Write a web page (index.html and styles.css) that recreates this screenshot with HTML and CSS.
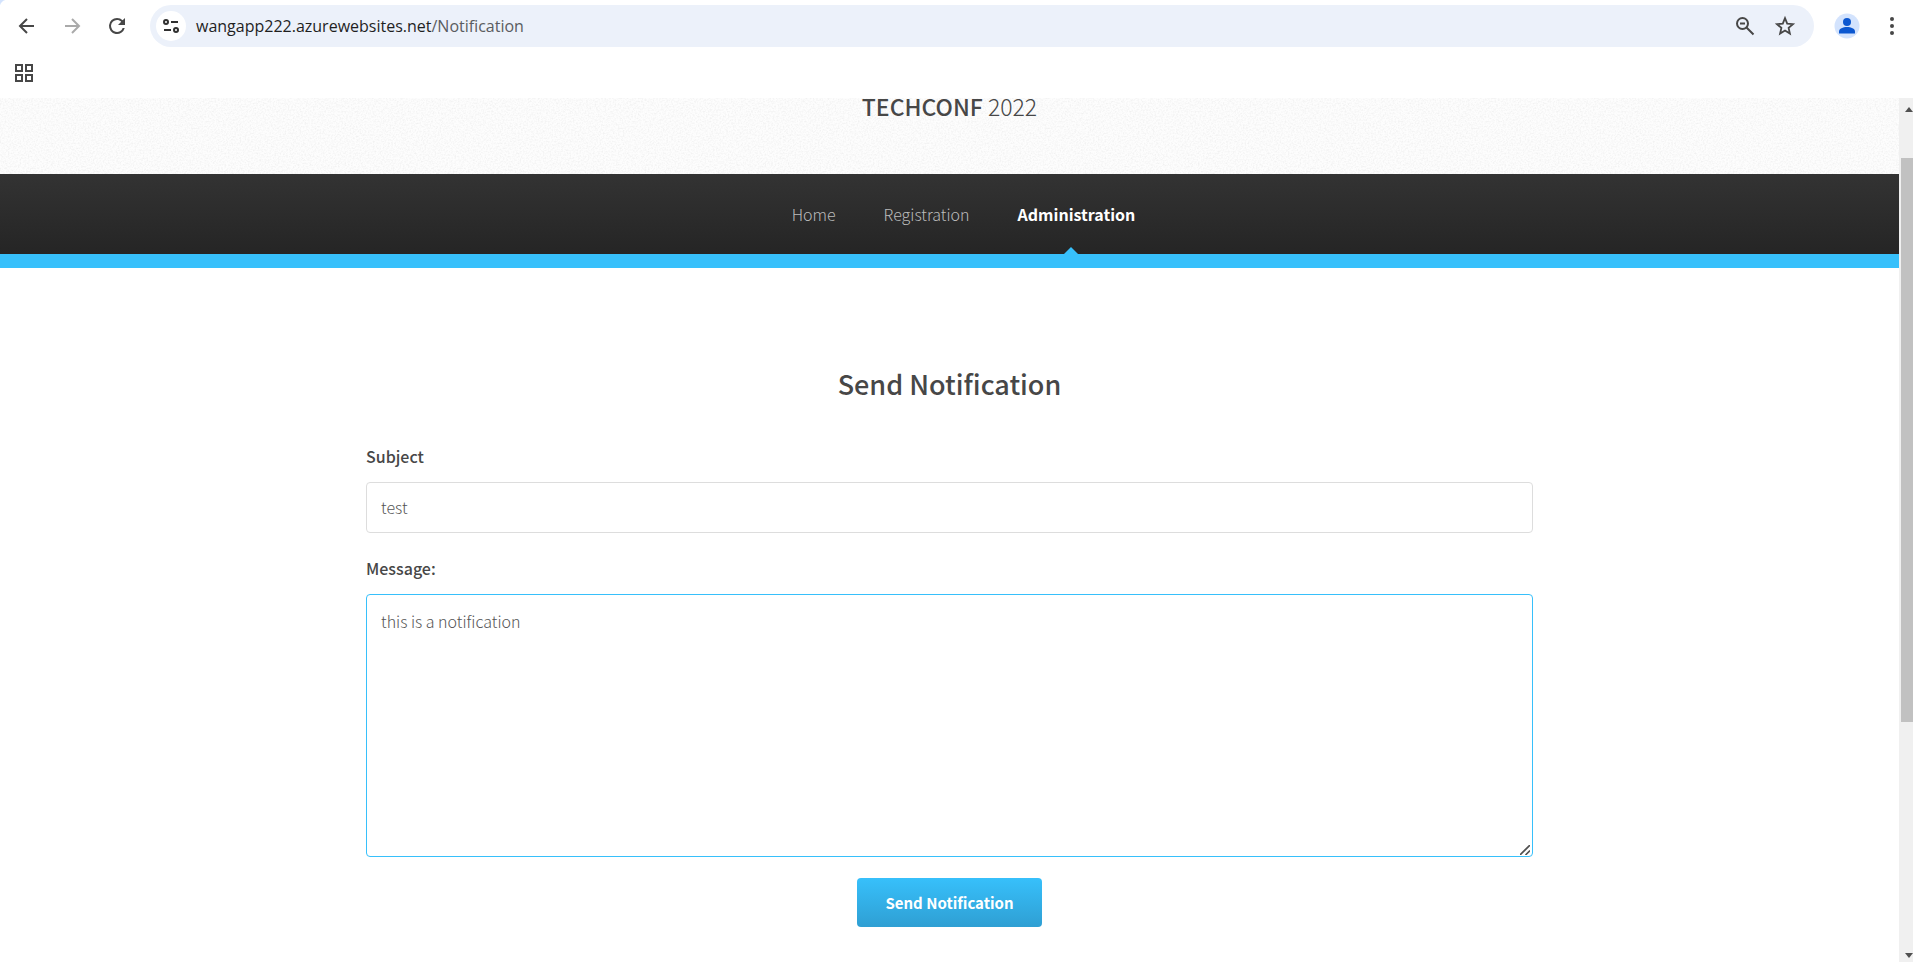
FILE: index.html
```html
<!DOCTYPE html>
<html lang="en">
<head>
<meta charset="utf-8">
<title>TechConf 2022 - Send Notification</title>
<link rel="stylesheet" href="styles.css">
</head>
<body>
<div class="browser">
  <div class="toolbar">
    <button class="tool" aria-label="Back"><svg width="24" height="24" viewBox="0 0 24 24"><path d="M19 12H5M12 5L5 12l7 7" fill="none" stroke="#474747" stroke-width="2"/></svg></button>
    <button class="tool" aria-label="Forward"><svg width="24" height="24" viewBox="0 0 24 24"><path d="M5 12h14M12 5l7 7-7 7" fill="none" stroke="#aaa" stroke-width="2"/></svg></button>
    <button class="tool" aria-label="Reload"><svg width="24" height="24" viewBox="0 0 24 24"><path d="M17.650 6.350A7.960 7.960 0 0 0 12 4a8 8 0 1 0 7.740 10h-2.080A6 6 0 1 1 12 6c1.660 0 3.140.690 4.220 1.780L13 11h7V4z" fill="#474747"/></svg></button>
    <div class="omnibox">
      <button class="site-info" aria-label="View site information"><svg width="20" height="20" viewBox="0 0 20 20"><g fill="none" stroke="#303030" stroke-width="2"><circle cx="5" cy="6" r="2"/><path d="M10 6h7M3 14h7"/><circle cx="15" cy="14" r="2"/></g></svg></button>
      <div class="address">wangapp222.azurewebsites.net<span class="path">/Notification</span></div>
      <button class="tool small" aria-label="Zoom"><svg width="24" height="24" viewBox="0 0 24 24"><g fill="none" stroke="#474747" stroke-width="2"><circle cx="9.500" cy="9.500" r="5.500"/><path d="M13.500 13.500l7 7M7 9.500h5"/></g></svg></button>
      <button class="tool small" aria-label="Bookmark this tab"><svg width="24" height="24" viewBox="0 0 24 24"><path d="M12 4.200l2.200 5.400 5.800.5-4.400 3.800 1.300 5.700-4.900-3-4.900 3 1.300-5.700L4 10.100l5.800-.5z" fill="none" stroke="#474747" stroke-width="1.800"/></svg></button>
    </div>
    <button class="avatar" aria-label="Profile"><svg width="26" height="26" viewBox="0 0 26 26"><circle cx="13" cy="13" r="12.500" fill="#d3e3fd"/><circle cx="13" cy="9" r="4" fill="#0b57d0"/><path d="M5 20.500v-2c0-3 4-4.500 8-4.500s8 1.500 8 4.500v2z" fill="#0b57d0"/></svg></button>
    <button class="tool menu" aria-label="Menu"><svg width="24" height="24" viewBox="0 0 24 24"><g fill="#474747"><circle cx="12" cy="5" r="2"/><circle cx="12" cy="12" r="2"/><circle cx="12" cy="19" r="2"/></g></svg></button>
  </div>
  <div class="bookmarks">
    <button class="tool" aria-label="Apps"><svg width="20" height="20" viewBox="0 0 20 20"><path d="M2 2h6v6H2zM12 2h6v6h-6zM2 12h6v6H2zM12 12h6v6h-6z" fill="none" stroke="#474747" stroke-width="2"/></svg></button>
  </div>
</div>
<div class="viewport">
  <div class="page">
    <header class="header">
      <svg class="grain" width="100%" height="100%" aria-hidden="true"><filter id="noise"><feTurbulence type="fractalNoise" baseFrequency="0.6" numOctaves="3"/><feColorMatrix values="0 0 0 0 0  0 0 0 0 0  0 0 0 0 0  0.100 0 0 0 -0.040"/></filter><rect width="100%" height="100%" filter="url(#noise)"/></svg>
      <h1 class="logo"><strong>TECHCONF</strong> 2022</h1>
    </header>
    <nav class="nav">
      <a href="#">Home</a>
      <a href="#">Registration</a>
      <a href="#" class="current">Administration</a>
    </nav>
    <main class="main">
      <h2 class="title">Send Notification</h2>
      <form class="form">
        <label for="subject">Subject</label>
        <input id="subject" type="text" value="test">
        <label for="message">Message:</label>
        <div class="message">
          <textarea id="message">this is a notification</textarea>
          <svg class="grip" width="10" height="10" viewBox="0 0 10 10" aria-hidden="true"><path d="M0 10L10 0M5.500 10L10 5.500" stroke="#505050" stroke-width="1.600"/></svg>
        </div>
        <button class="submit" type="button">Send Notification</button>
      </form>
    </main>
  </div>
  <div class="scrollbar" aria-hidden="true">
    <svg width="8" height="5" viewBox="0 0 8 5"><path d="M4 0l4 5H0z" fill="#505050"/></svg>
    <div class="track"><div class="thumb"></div></div>
    <svg width="8" height="5" viewBox="0 0 8 5"><path d="M4 5l4-5H0z" fill="#505050"/></svg>
  </div>
</div>
</body>
</html>
```
FILE: styles.css
```css
* { box-sizing: border-box; }
body {
  margin: 0;
  height: 100vh;
  display: flex;
  flex-direction: column;
  overflow: hidden;
  background: #fff;
  color: #474747;
  font-family: "Noto Sans CJK SC", "Open Sans", sans-serif;
  font-size: 16px;
  font-weight: 300;
}
button { font: inherit; border: 0; background: none; padding: 0; }
svg { display: block; }

.browser { flex: none; padding-top: 5px; background: radial-gradient(circle at 8px 8px, #fff 8px, #d3e3fd 9px) 0 0 / 8px 8px no-repeat #fff; }
.toolbar { display: flex; align-items: center; height: 42px; padding: 0 9px 0 15px; }
.tool { flex: none; display: flex; align-items: center; justify-content: center; width: 24px; height: 24px; margin-right: 21px; }
.omnibox { flex: 1; display: flex; align-items: center; height: 42px; padding: 0 17px 0 6px; border-radius: 21px; background: #ecf1fa; }
.site-info { display: flex; align-items: center; justify-content: center; width: 30px; height: 30px; border-radius: 50%; background: #fff; }
.address { flex: 1; margin-left: 10px; font: 400 16px/24px "Open Sans", sans-serif; color: #1f1f1f; }
.path { color: #5a5c60; }
.tool.small { margin: 0 0 0 16px; }
.avatar { margin: 0 20px; }
.tool.menu { margin: 0; }
.bookmarks { display: flex; padding: 14px 0 13px 12px; }

.viewport { flex: 1; min-height: 0; display: flex; }
.page { flex: 1; min-width: 0; overflow: hidden; }
.header { position: relative; height: 76px; background: #fdfdfd; overflow: hidden; }
.grain { position: absolute; inset: 0; }
.logo { position: relative; margin: 0; font-size: 23px; line-height: 16px; font-weight: 300; text-align: center; }
.logo strong { font-weight: 500; }
.nav { display: flex; justify-content: center; gap: 48px; height: 94px; padding-left: 28px; border-bottom: 14px solid #37c0fb; background: linear-gradient(#333, #252525) padding-box; }
.nav a { position: relative; color: #bbb; line-height: 80px; text-decoration: none; }
.nav .current { color: #fff; font-weight: 700; }
.current::after { content: ""; position: absolute; left: 50%; bottom: 0; margin-left: -12px; border: 7px solid transparent; border-top-width: 0; border-bottom-color: #37c0fb; }
.main { max-width: 1167px; margin: 0 auto; padding-top: 96px; }
.title { margin: 0 0 40px; font-size: 27px; line-height: 40px; font-weight: 500; text-align: center; }
.form { display: flex; flex-direction: column; }
.form label { margin-bottom: 14px; line-height: 24px; font-weight: 500; }
.form input, .form textarea { display: block; width: 100%; border: 1px solid #ddd; border-radius: 4px; background: #fff; color: #555; font: inherit; outline: 0; }
.form input { height: 51px; margin-bottom: 23px; padding: 0 14px 2px; }
.message { position: relative; margin-bottom: 21px; }
.form textarea { height: 263px; padding: 12px 14px; line-height: 28px; border-color: #37c0fb; resize: none; }
.grip { position: absolute; right: 3px; bottom: 2px; }
.submit { align-self: center; height: 49px; padding: 0 28px; border-radius: 4px; color: #fff; font-size: 15px; font-weight: 700; background: linear-gradient(#37c0fb, #2f9fd3); }
.scrollbar { flex: none; width: 14px; display: flex; flex-direction: column; align-items: flex-end; padding: 9px 0 4px 2px; background: #f0f0f0; overflow: hidden; }
.scrollbar svg { flex: none; }
.track { flex: 1; width: 100%; padding-top: 46px; }
.thumb { height: 71%; background: #c1c1c1; }
```
